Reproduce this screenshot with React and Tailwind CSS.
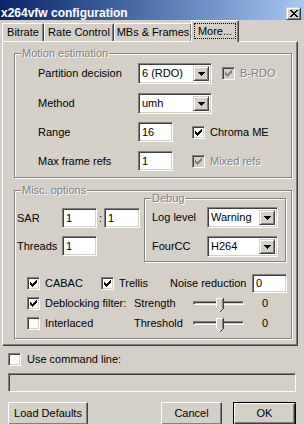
import React from "react";

const sunken =
  "border border-t-[#808080] border-l-[#808080] border-b-white border-r-white shadow-[inset_1px_1px_0_#404040,inset_-1px_-1px_0_#d4d0c8]";
const raised =
  "border border-t-white border-l-white border-b-[#404040] border-r-[#404040] shadow-[inset_-1px_-1px_0_#808080]";
const raisedCombo =
  "border border-t-[#d4d0c8] border-l-[#d4d0c8] border-b-[#404040] border-r-[#404040] shadow-[inset_1px_1px_0_#fff,inset_-1px_-1px_0_#808080]";

function Check({ disabled }) {
  return (
    <svg width="7" height="7" viewBox="0 0 7 7" shapeRendering="crispEdges">
      <path
        d="M6 0h1v3h-1zM5 1h1v3h-1zM4 2h1v3h-1zM3 3h1v3h-1zM2 4h1v3h-1zM1 3h1v3h-1zM0 2h1v3h-1z"
        fill={disabled ? "#808080" : "#000"}
      />
    </svg>
  );
}

function CheckBox({ checked, disabled }) {
  return (
    <div
      className={`w-[13px] h-[13px] shrink-0 flex items-center justify-center ${sunken} ${
        disabled ? "bg-[#d4d0c8]" : "bg-white"
      }`}
    >
      {checked && <Check disabled={disabled} />}
    </div>
  );
}

function Arrow() {
  return (
    <svg width="7" height="4" viewBox="0 0 7 4" shapeRendering="crispEdges">
      <path d="M0 0h7v1h-7zM1 1h5v1h-5zM2 2h3v1h-3zM3 3h1v1h-1z" fill="#000" />
    </svg>
  );
}

function Combo({ value, w }) {
  return (
    <div className={`${w} h-[21px] shrink-0 bg-white flex items-center ${sunken} p-[2px]`}>
      <span className="flex-1 pl-[1px] text-[11px]">{value}</span>
      <div className={`w-[16px] h-full bg-[#d4d0c8] flex items-center justify-center ${raisedCombo}`}>
        <Arrow />
      </div>
    </div>
  );
}

function Edit({ value, w, h = "h-[20px]" }) {
  return (
    <div className={`${w} ${h} shrink-0 bg-white flex items-center pl-[3px] ${sunken}`}>
      {value}
    </div>
  );
}

function Group({ label, className, children }) {
  return (
    <div
      className={`relative border border-[#808080] shadow-[inset_1px_1px_0_#fff,1px_1px_0_#fff] ${className}`}
    >
      <span className="absolute left-[6px] top-[-7px] bg-[#d4d0c8] px-[1px] text-[#808080] [text-shadow:1px_1px_0_#fff] leading-[13px]">
        {label}
      </span>
      {children}
    </div>
  );
}

function Slider() {
  return (
    <div className="relative w-[51px] h-[20px] shrink-0 flex items-center">
      <div className="w-full h-[4px] bg-[#d4d0c8] border border-t-[#808080] border-l-[#808080] border-b-white border-r-white shadow-[inset_1px_1px_0_#404040]" />
      <svg
        className="absolute left-[23px] top-[5px]"
        width="8"
        height="14"
        viewBox="0 0 8 14"
        shapeRendering="crispEdges"
      >
        <path d="M0 0h8v10l-4 4l-4-4z" fill="#d4d0c8" />
        <path d="M0 0h7v1h-6v9h-1z" fill="#fff" />
        <path d="M7 0h1v10h-1z" fill="#404040" />
        <path d="M6 1h1v9h-1z" fill="#808080" />
        <path d="M7 10h1v1h-1zM6 11h1v1h-1zM5 12h1v1h-1zM4 13h1v1h-1z" fill="#404040" />
        <path d="M1 10h1v1h-1zM2 11h1v1h-1zM3 12h1v1h-1z" fill="#fff" />
      </svg>
    </div>
  );
}

function Tab({ w, children }) {
  return (
    <div
      className={`${w} h-[18px] shrink-0 flex items-center justify-center border-t border-l border-t-white border-l-white border-r border-r-[#404040] shadow-[inset_-1px_0_0_#808080] rounded-t-[2px]`}
    >
      {children}
    </div>
  );
}

function Button({ w, children, isDefault }) {
  if (isDefault) {
    return (
      <div className={`${w} h-[23px] shrink-0 border border-black`}>
        <div className={`w-full h-full flex items-center justify-center ${raised}`}>{children}</div>
      </div>
    );
  }
  return (
    <div className={`${w} h-[23px] shrink-0 flex items-center justify-center ${raised}`}>
      {children}
    </div>
  );
}

export default function App() {
  return (
    <div className="w-[304px] h-[424px] overflow-hidden bg-[#d4d0c8] font-['Liberation_Sans',Arial,sans-serif] text-[11px] text-black leading-none flex flex-col select-none">
      {/* Title bar */}
      <div className="h-[20px] shrink-0 bg-linear-to-r from-[#0a246a] to-[#a6caf0] flex items-start justify-between pl-[1px] pr-[3px] pt-[7px]">
        <span className="text-white font-bold text-[12px] leading-[12px]">x264vfw configuration</span>
        <div className={`w-[15px] h-[13px] bg-[#d4d0c8] flex items-center justify-center ${raisedCombo}`}>
          <svg width="8" height="7" viewBox="0 0 8 7" shapeRendering="crispEdges">
            <path
              d="M0 0h2v1h-2zM6 0h2v1h-2zM1 1h2v1h-2zM5 1h2v1h-2zM2 2h4v1h-4zM3 3h2v1h-2zM2 4h4v1h-4zM1 5h2v1h-2zM5 5h2v1h-2zM0 6h2v1h-2zM6 6h2v1h-2z"
              fill="#000"
            />
          </svg>
        </div>
      </div>

      {/* Tabs */}
      <div className="h-[21px] shrink-0 flex items-end pl-[2px] relative z-10">
        <Tab w="w-[42px]">Bitrate</Tab>
        <Tab w="w-[70px]">Rate Control</Tab>
        <Tab w="w-[78px]">MBs &amp; Frames</Tab>
        <div className="w-[48px] h-[22px] -mb-[1px] -ml-[1px] shrink-0 bg-[#d4d0c8] border-t border-l border-t-white border-l-white border-r border-r-[#404040] shadow-[inset_-1px_0_0_#808080] rounded-t-[2px] flex items-start justify-center pt-[2px]">
          <div className="px-[3px] h-[16px] flex items-center border border-dotted border-black">More...</div>
        </div>
      </div>

      {/* Tab panel */}
      <div className="ml-[2px] w-[296px] h-[305px] shrink-0 border border-t-white border-l-white border-r-[#404040] border-b-[#404040] shadow-[inset_-1px_-1px_0_#808080] flex flex-col pl-[11px] pt-[11px]">
        {/* Motion estimation */}
        <Group label="Motion estimation" className="w-[278px] h-[125px] shrink-0">
          <div className="flex flex-col pt-[9px] pl-[23px]">
            <div className="flex items-center h-[21px]">
              <span className="w-[100px]">Partition decision</span>
              <Combo value="6 (RDO)" w="w-[74px]" />
              <div className="ml-[10px]">
                <CheckBox checked disabled />
              </div>
              <span className="ml-[5px] text-[#808080] [text-shadow:1px_1px_0_#fff]">B-RDO</span>
            </div>
            <div className="flex items-center h-[21px] mt-[9px]">
              <span className="w-[100px]">Method</span>
              <Combo value="umh" w="w-[74px]" />
            </div>
            <div className="flex items-center h-[20px] mt-[8px]">
              <span className="w-[100px]">Range</span>
              <Edit value="16" w="w-[35px]" />
              <div className="ml-[19px]">
                <CheckBox checked />
              </div>
              <span className="ml-[5px]">Chroma ME</span>
            </div>
            <div className="flex items-center h-[20px] mt-[9px]">
              <span className="w-[100px]">Max frame refs</span>
              <Edit value="1" w="w-[35px]" />
              <div className="ml-[19px]">
                <CheckBox checked disabled />
              </div>
              <span className="ml-[5px] text-[#808080] [text-shadow:1px_1px_0_#fff]">Mixed refs</span>
            </div>
          </div>
        </Group>

        {/* Misc options */}
        <Group label="Misc. options" className="w-[278px] h-[149px] shrink-0 mt-[12px]">
          <div className="flex items-start pt-[7px] pl-[2px]">
            <div className="w-[127px] shrink-0 flex flex-col mt-[10px]">
              <div className="flex items-center h-[20px]">
                <span className="w-[45px]">SAR</span>
                <Edit value="1" w="w-[35px]" />
                <span className="w-[7px] text-center">:</span>
                <Edit value="1" w="w-[36px]" />
              </div>
              <div className="flex items-center h-[20px] mt-[8px]">
                <span className="w-[45px]">Threads</span>
                <Edit value="1" w="w-[35px]" />
              </div>
            </div>
            <Group label="Debug" className="w-[142px] h-[64px] shrink-0">
              <div className="flex flex-col pt-[8px] pl-[7px]">
                <div className="flex items-center h-[21px]">
                  <span className="w-[55px]">Log level</span>
                  <Combo value="Warning" w="w-[71px]" />
                </div>
                <div className="flex items-center h-[21px] mt-[8px]">
                  <span className="w-[55px]">FourCC</span>
                  <Combo value="H264" w="w-[71px]" />
                </div>
              </div>
            </Group>
          </div>

          <div className="flex flex-col pl-[12px] mt-[11px]">
            <div className="flex items-center h-[20px]">
              <div className="w-[74px] flex items-center gap-[5px]">
                <CheckBox checked />
                <span>CABAC</span>
              </div>
              <div className="w-[69px] flex items-center gap-[5px]">
                <CheckBox checked />
                <span>Trellis</span>
              </div>
              <span className="w-[82px]">Noise reduction</span>
              <Edit value="0" w="w-[35px]" h="h-[19px]" />
            </div>
            <div className="flex items-center h-[20px]">
              <div className="w-[107px] flex items-center gap-[5px]">
                <CheckBox checked />
                <span>Deblocking filter:</span>
              </div>
              <span className="w-[59px]">Strength</span>
              <Slider />
              <span className="ml-[18px]">0</span>
            </div>
            <div className="flex items-center h-[20px]">
              <div className="w-[107px] flex items-center gap-[5px]">
                <CheckBox />
                <span>Interlaced</span>
              </div>
              <span className="w-[59px]">Threshold</span>
              <Slider />
              <span className="ml-[18px]">0</span>
            </div>
          </div>
        </Group>
      </div>

      {/* Bottom */}
      <div className="flex items-center mt-[7px] pl-[8px] h-[13px] gap-[6px]">
        <CheckBox />
        <span>Use command line:</span>
      </div>
      <div className={`ml-[8px] mt-[7px] w-[288px] h-[19px] shrink-0 bg-[#d4d0c8] ${sunken}`} />
      <div className="flex items-start mt-[10px] pl-[8px]">
        <Button w="w-[80px]">Load Defaults</Button>
        <div className="ml-[73px]">
          <Button w="w-[61px]">Cancel</Button>
        </div>
        <div className="ml-[11px]">
          <Button w="w-[63px]" isDefault>
            OK
          </Button>
        </div>
      </div>
    </div>
  );
}
